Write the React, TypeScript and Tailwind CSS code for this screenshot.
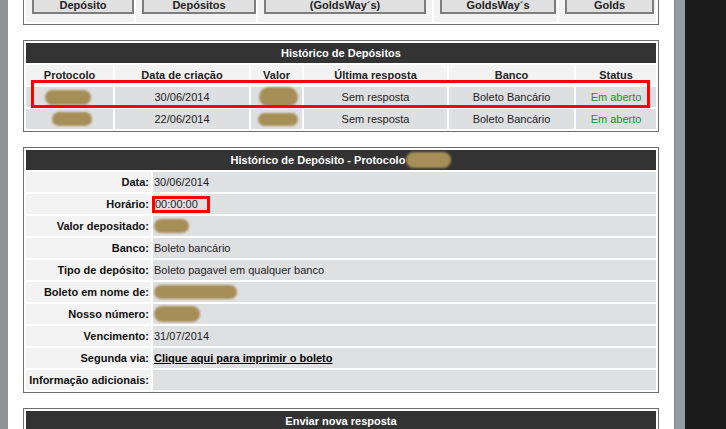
import React from 'react';

const font = { fontFamily: '"Liberation Sans", Arial, sans-serif' };

function Blob({ className }: { className: string }) {
  return <span className={`inline-block rounded-full bg-[#a68e57] blur-[1px] align-middle ${className}`} />;
}

function Panel({ children, className = '' }: { children: React.ReactNode; className?: string }) {
  return <div className={`relative border border-[#6e6e6e] bg-white p-[2px] ${className}`}>{children}</div>;
}

function Header({ children }: { children: React.ReactNode }) {
  return (
    <div className="flex h-[20px] items-center justify-center bg-[#333333] text-[11px] font-bold text-white">
      {children}
    </div>
  );
}

const navButtons = [
  { label: 'Depósito', w: 'w-[102px]' },
  { label: 'Depósitos', w: 'w-[114px]' },
  { label: '(GoldsWay´s)', w: 'w-[162px]' },
  { label: 'GoldsWay´s', w: 'w-[116px]' },
  { label: 'Golds', w: 'w-[89px]' },
];

const cols = 'grid grid-cols-[87px_134px_51px_143px_125px_1fr] gap-[2px]';

const rows = [
  { date: '30/06/2014', p: 'w-[46px] h-[15px] ml-[-4px]', v: 'w-[39px] h-[20px] ml-[4px]' },
  { date: '22/06/2014', p: 'w-[40px] h-[14px] ml-[4px]', v: 'w-[40px] h-[13px] ml-[2px]' },
];

function Detail({ label, children }: { label: string; children?: React.ReactNode }) {
  return (
    <>
      <div className="flex h-[20px] items-center justify-end bg-[#f3f3f3] pr-[2px] text-[11px] font-bold text-[#111]">
        {label}
      </div>
      <div className="flex h-[20px] items-center bg-[#dfe0e2] pl-[1px] text-[11px] text-[#222]">{children}</div>
    </>
  );
}

export default function App() {
  return (
    <div className="flex h-[429px] w-[726px] overflow-hidden bg-white" style={font}>
      <div className="w-[8px] shrink-0 bg-[#8f9397]" />
      <div className="flex w-[666px] shrink-0 flex-col px-[15px]">
        <Panel className="-mt-[15px]">
          <div className="grid grid-cols-[108px_120px_174px_123px_1fr] gap-[2px]">
            {navButtons.map((b) => (
              <div key={b.label} className="bg-[#f2f2f2] pt-[8px] pb-[8px] pl-[6px]">
                <div
                  className={`flex h-[18px] items-center justify-center border-2 border-[#7d7d7d] bg-[#e0e0e0] text-[11px] font-bold text-[#222] ${b.w}`}
                >
                  {b.label}
                </div>
              </div>
            ))}
          </div>
        </Panel>

        <Panel className="mt-[15px]">
          <div className="flex flex-col gap-[2px]">
            <Header>Histórico de Depósitos</Header>
            <div className={`${cols} text-[11px] font-bold text-[#222]`}>
              {['Protocolo', 'Data de criação', 'Valor', 'Última resposta', 'Banco', 'Status'].map((h) => (
                <div key={h} className="flex h-[20px] items-center justify-center bg-[#f3f3f3]">
                  {h}
                </div>
              ))}
            </div>
            {rows.map((r) => (
              <div key={r.date} className={`${cols} text-[11px] text-[#222]`}>
                <div className="flex h-[20px] items-center justify-center bg-[#dedfe1]">
                  <Blob className={r.p} />
                </div>
                <div className="flex h-[20px] items-center justify-center bg-[#dedfe1]">{r.date}</div>
                <div className="flex h-[20px] items-center justify-center bg-[#dedfe1]">
                  <Blob className={r.v} />
                </div>
                <div className="flex h-[20px] items-center justify-center bg-[#dedfe1]">Sem resposta</div>
                <div className="flex h-[20px] items-center justify-center bg-[#dedfe1]">Boleto Bancário</div>
                <div className="flex h-[20px] items-center justify-center bg-[#dedfe1] text-[#169616]">Em aberto</div>
              </div>
            ))}
          </div>
          <div className="absolute top-[39px] left-[7px] h-[28px] w-[619px] border-[3px] border-[#ff0000]" />
        </Panel>

        <Panel className="mt-[15px]">
          <div className="flex flex-col gap-[2px]">
            <Header>
              Histórico de Depósito - Protocolo
              <Blob className="ml-[1px] h-[16px] w-[45px]" />
            </Header>
            <div className="grid grid-cols-[125px_1fr] gap-[2px]">
              <Detail label="Data:">30/06/2014</Detail>
              <Detail label="Horário:">
                <span className="-ml-[2px] inline-block border-[3px] border-[#ff0000] pr-[9px] leading-[11px]">00:00:00</span>
              </Detail>
              <Detail label="Valor depositado:">
                <Blob className="h-[14px] w-[35px]" />
              </Detail>
              <Detail label="Banco:">Boleto bancário</Detail>
              <Detail label="Tipo de depósito:">Boleto pagavel em qualquer banco</Detail>
              <Detail label="Boleto em nome de:">
                <Blob className="h-[14px] w-[83px]" />
              </Detail>
              <Detail label="Nosso número:">
                <Blob className="h-[16px] w-[46px]" />
              </Detail>
              <Detail label="Vencimento:">31/07/2014</Detail>
              <Detail label="Segunda via:">
                <a href="#" className="font-bold text-black underline">
                  Clique aqui para imprimir o boleto
                </a>
              </Detail>
              <Detail label="Informação adicionais:" />
            </div>
          </div>
        </Panel>

        <Panel className="mt-[15px]">
          <Header>Enviar nova resposta</Header>
          <div className="h-[40px] bg-[#f3f3f3]" />
        </Panel>
      </div>
      <div className="w-[11px] shrink-0 border-l border-[#85898d] bg-[#979ca0]" />
      <div className="flex-1 bg-[#1c1c1c]" />
    </div>
  );
}
